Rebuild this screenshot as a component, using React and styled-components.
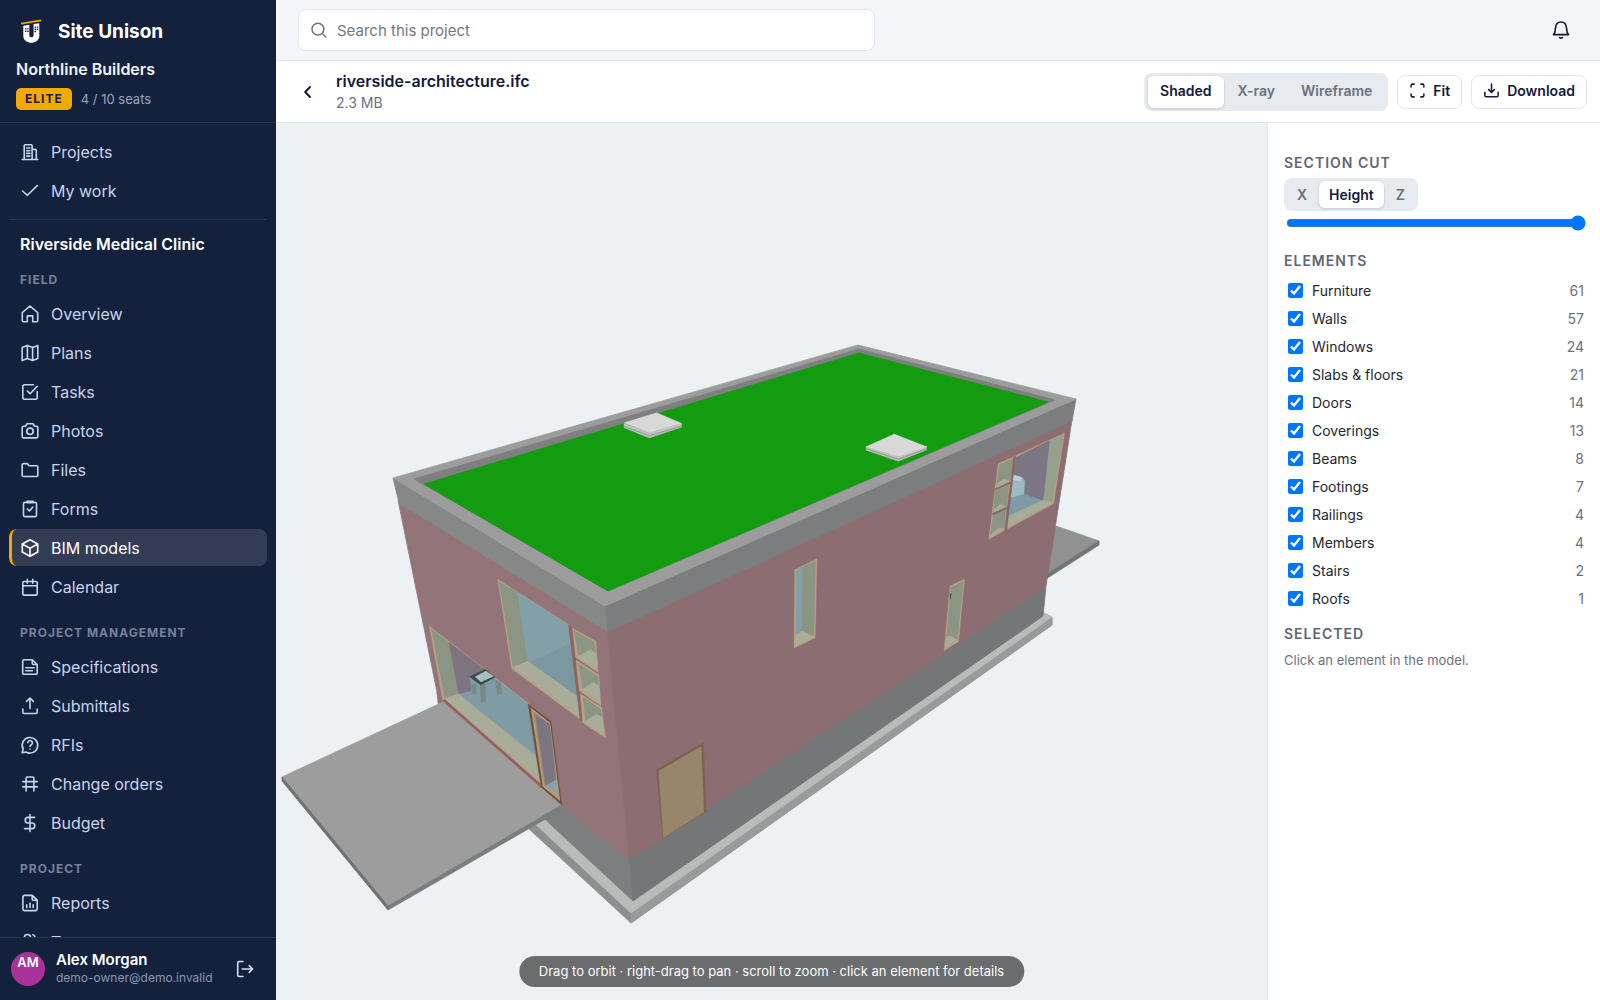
import React, { useState } from 'react';
import styled, { createGlobalStyle, ThemeProvider } from 'styled-components';

const theme = {
  colors: {
    navy: '#14213d',
    navyLine: '#26324e',
    gold: '#f2a900',
    ink: '#14193a',
    text: '#23272f',
    muted: '#6b7280',
    line: '#e2e5ea',
    track: '#e7eaef',
    page: '#f3f5f9',
    canvas: '#edf1f4',
  },
};

const GlobalStyle = createGlobalStyle`
  *, *::before, *::after { box-sizing: border-box; }
  body {
    margin: 0;
    font-family: Inter, "Liberation Sans", sans-serif;
    font-size: 16px;
    color: ${theme.colors.text};
  }
  button, input { font-family: inherit; }
`;

const Shell = styled.div`
  display: flex;
  height: 100vh;
  overflow: hidden;
  background: ${(props) => props.theme.colors.page};
`;

/* ---------- sidebar ---------- */

const Sidebar = styled.aside`
  flex: 0 0 276px;
  display: flex;
  flex-direction: column;
  min-width: 0;
  min-height: 0;
  background: ${(props) => props.theme.colors.navy};
`;

const SidebarHead = styled.div`
  padding: 12px 16px;
  border-bottom: 1px solid ${(props) => props.theme.colors.navyLine};
`;

const Brand = styled.div`
  display: flex;
  align-items: center;
  gap: 12px;
  height: 38px;
  color: #fff;
  font-size: 19px;
  font-weight: 700;
`;

const OrgName = styled.div`
  margin-top: 8px;
  line-height: 22px;
  font-size: 16px;
  font-weight: 600;
  color: #f1f4fa;
`;

const PlanRow = styled.div`
  display: flex;
  align-items: center;
  gap: 9px;
  margin-top: 8px;
  font-size: 13px;
  color: #98a5c0;
`;

const PlanBadge = styled.span`
  padding: 0 9px;
  border-radius: 5px;
  line-height: 22px;
  font-size: 12px;
  font-weight: 700;
  letter-spacing: 1px;
  color: ${(props) => props.theme.colors.navy};
  background: ${(props) => props.theme.colors.gold};
`;

const Nav = styled.nav`
  flex: 1;
  min-height: 0;
  overflow-y: auto;
  scrollbar-width: none;
  padding: 10px 9px 0;
`;

const NavList = styled.ul`
  display: flex;
  flex-direction: column;
  gap: 2px;
  margin: 0;
  padding: 0;
  list-style: none;
`;

const NavLink = styled.a`
  display: flex;
  align-items: center;
  gap: 11px;
  height: 37px;
  padding: 0 8px;
  border-left: 3px solid ${(props) => (props.$active ? props.theme.colors.gold : 'transparent')};
  border-radius: 8px;
  background: ${(props) => (props.$active ? '#323c55' : 'transparent')};
  color: ${(props) => (props.$active ? '#fff' : '#c8d4ee')};
  text-decoration: none;
`;

const ProjectName = styled.div`
  margin-top: 10px;
  padding: 12px 11px 0;
  border-top: 1px solid ${(props) => props.theme.colors.navyLine};
  line-height: 24px;
  font-weight: 600;
  color: #fff;
`;

const NavHeading = styled.h2`
  margin: ${(props) => (props.$first ? '16px' : '20px')} 0 7px;
  padding: 0 11px;
  line-height: 16px;
  font-size: 12px;
  font-weight: 700;
  letter-spacing: 1px;
  text-transform: uppercase;
  color: #76819b;
`;

const UserBar = styled.div`
  display: flex;
  align-items: center;
  gap: 11px;
  height: 63px;
  padding: 0 21px 0 11px;
  border-top: 1px solid ${(props) => props.theme.colors.navyLine};
`;

const Avatar = styled.span`
  flex: none;
  width: 34px;
  height: 34px;
  padding-top: 2px;
  border-radius: 50%;
  background: #a8329a;
  color: #fff;
  font-size: 13px;
  font-weight: 600;
  line-height: 16px;
  text-align: center;
`;

const UserText = styled.div`
  flex: 1;
  min-width: 0;
  line-height: 18px;
  white-space: nowrap;
`;

const UserName = styled.div`
  font-size: 15px;
  font-weight: 600;
  color: #fff;
`;

const UserMail = styled.div`
  font-size: 12px;
  color: #8a96b0;
`;

const PlainButton = styled.button`
  display: flex;
  padding: 0;
  border: 0;
  background: none;
  color: ${(props) => props.$color || props.theme.colors.ink};
  cursor: pointer;
`;

/* ---------- main column ---------- */

const Main = styled.main`
  flex: 1;
  min-width: 0;
  display: flex;
  flex-direction: column;
`;

const TopBar = styled.header`
  display: flex;
  align-items: center;
  justify-content: space-between;
  height: 61px;
  padding: 0 29px 0 22px;
  border-bottom: 1px solid ${(props) => props.theme.colors.line};
`;

const SearchBox = styled.label`
  display: flex;
  align-items: center;
  gap: 9px;
  flex: 0 1 577px;
  height: 42px;
  padding: 0 11px;
  border: 1px solid ${(props) => props.theme.colors.line};
  border-radius: 8px;
  background: #fff;
  color: ${(props) => props.theme.colors.muted};
`;

const SearchInput = styled.input`
  flex: 1;
  min-width: 0;
  padding: 0;
  border: 0;
  outline: 0;
  background: none;
  font-size: 15px;
  color: ${(props) => props.theme.colors.text};
  &::placeholder { color: #737780; opacity: 1; }
`;

const FileBar = styled.div`
  display: flex;
  align-items: center;
  gap: 9px;
  height: 62px;
  padding: 0 13px 0 22px;
  border-bottom: 1px solid ${(props) => props.theme.colors.line};
  background: #fff;
`;

const FileInfo = styled.div`
  flex: 1;
  padding: 0 0 2px 9px;
`;

const FileName = styled.h1`
  margin: 0;
  font-size: 16px;
  font-weight: 600;
  line-height: 24px;
  color: ${(props) => props.theme.colors.ink};
`;

const FileSize = styled.div`
  font-size: 14px;
  line-height: 20px;
  color: ${(props) => props.theme.colors.muted};
`;

const Segments = styled.div`
  display: inline-flex;
  gap: 2px;
  padding: ${(props) => (props.$small ? '3px' : '3px 4px')};
  border-radius: 8px;
  background: ${(props) => props.theme.colors.track};
`;

const Segment = styled.button`
  height: ${(props) => (props.$small ? '27px' : '32px')};
  padding: ${(props) => (props.$small ? '0 10px' : '0 12px 2px')};
  border: 0;
  border-radius: 6px;
  font-size: 14px;
  font-weight: 600;
  cursor: pointer;
  background: ${(props) => (props.$on ? '#fff' : 'transparent')};
  color: ${(props) => (props.$on ? props.theme.colors.ink : props.theme.colors.muted)};
  box-shadow: ${(props) => (props.$on ? '0 1px 3px rgba(20, 33, 61, 0.18)' : 'none')};
`;

const ActionButton = styled.button`
  display: flex;
  align-items: center;
  gap: 7px;
  height: 34px;
  padding: 0 11px 2px;
  border: 1px solid ${(props) => props.theme.colors.line};
  border-radius: 8px;
  background: #fff;
  font-size: 14px;
  font-weight: 600;
  color: ${(props) => props.theme.colors.ink};
  cursor: pointer;
`;

const Workspace = styled.div`
  flex: 1;
  min-height: 0;
  display: flex;
`;

const Viewer = styled.div`
  position: relative;
  flex: 1;
  min-width: 0;
  background: ${(props) => props.theme.colors.canvas};
`;

const Scene = styled.svg`
  display: block;
  width: 100%;
  height: 100%;
`;

const Hint = styled.div`
  position: absolute;
  left: 50%;
  bottom: 13px;
  transform: translateX(-50%);
  padding: 0 20px;
  border-radius: 16px;
  line-height: 31px;
  font-size: 13px;
  white-space: nowrap;
  color: #fff;
  background: #6a6c6e;
`;

const Panel = styled.aside`
  flex: 0 0 333px;
  padding: 30px 12px 16px 16px;
  border-left: 1px solid ${(props) => props.theme.colors.line};
  background: #fff;
`;

const PanelTitle = styled.h2`
  margin: 0 0 5px;
  font-size: 14px;
  font-weight: 600;
  line-height: 20px;
  letter-spacing: 1px;
  text-transform: uppercase;
  color: #5f6675;
`;

const CutSlider = styled.input`
  display: block;
  width: calc(100% - 4px);
  height: 16px;
  margin: 4px 2px 20px;
  accent-color: #0075ff;
`;

const ElementRow = styled.label`
  display: flex;
  align-items: center;
  height: 28px;
  font-size: 14px;
`;

const Tick = styled.input`
  width: 15px;
  height: 15px;
  margin: 0 9px 0 4px;
  accent-color: #0075ff;
`;

const Count = styled.span`
  margin-left: auto;
  padding-right: 4px;
  color: ${(props) => props.theme.colors.muted};
`;

const ElementList = styled.div`
  margin-bottom: 12px;
`;

const PanelNote = styled.p`
  margin: 0;
  font-size: 13px;
  line-height: 22px;
  color: ${(props) => props.theme.colors.muted};
`;

/* ---------- icons, drawn on a 20 x 20 grid ---------- */

const IconSvg = styled.svg`
  flex: none;
  fill: none;
  stroke: currentColor;
  stroke-width: ${(props) => props.$weight || 1.6};
  stroke-linecap: round;
  stroke-linejoin: round;
`;

const icons = {
  projects: 'M2.2 17.5h15.6M4.2 17.5V3.8a1 1 0 0 1 1-1h5.9a1 1 0 0 1 1 1v13.7M12.1 7.4h3.2a1 1 0 0 1 1 1v9.1M6.6 6h3.2M6.6 8.7h3.2M6.6 11.4h3.2M6.6 14.1h3.2',
  check: 'M2.6 10 7.4 14.3 17.2 4.6',
  home: 'M2.3 8.5 10 2.2l7.7 6.3v8.2a1 1 0 0 1-1 1h-4v-5.8H7.3v5.8h-4a1 1 0 0 1-1-1z',
  map: 'M2.2 4.4 7.4 2.4l5.2 2 5.2-2v13.2l-5.2 2-5.2-2-5.2 2zM7.4 2.4v13.2M12.6 4.4v13.2',
  task: 'M17.2 9.6v6.2a1.5 1.5 0 0 1-1.5 1.5H4.3a1.5 1.5 0 0 1-1.5-1.5V4.3a1.5 1.5 0 0 1 1.5-1.5h9.2M7.3 9l2.8 2.8 7-7.4',
  camera: 'M7 2.8h6l1.6 2.5h1.9a1.3 1.3 0 0 1 1.3 1.3v9a1.3 1.3 0 0 1-1.3 1.3h-13a1.3 1.3 0 0 1-1.3-1.3v-9a1.3 1.3 0 0 1 1.3-1.3h1.9zM13.2 10.3a3.2 3.2 0 1 1-6.4 0 3.2 3.2 0 0 1 6.4 0z',
  folder: 'M2.2 4.9a1.3 1.3 0 0 1 1.3-1.3h3.7l1.9 2.1h7.4A1.3 1.3 0 0 1 17.8 7v8.2a1.3 1.3 0 0 1-1.3 1.3h-13a1.3 1.3 0 0 1-1.3-1.3z',
  form: 'M4.8 3.4h10.4a1.3 1.3 0 0 1 1.3 1.3v11.6a1.3 1.3 0 0 1-1.3 1.3H4.8a1.3 1.3 0 0 1-1.3-1.3V4.7a1.3 1.3 0 0 1 1.3-1.3zM7 2.4h6v1.4H7zM7.4 10l2 2 3.3-3.8',
  cube: 'M10 1.8 17.7 6v8L10 18.2 2.3 14V6zM2.5 6.1 10 10.2l7.5-4.1M10 10.2v7.9',
  calendar: 'M4 4.5h12a1.2 1.2 0 0 1 1.2 1.2v11.2a1.2 1.2 0 0 1-1.2 1.2H4a1.2 1.2 0 0 1-1.2-1.2V5.7A1.2 1.2 0 0 1 4 4.5zM2.8 8.8h14.4M7.3 2.4v3.8M12.7 2.4v3.8',
  spec: 'M4.1 2.8h8.2l4.9 4.7v8.4a1.4 1.4 0 0 1-1.4 1.4H4.1a1.4 1.4 0 0 1-1.4-1.4V4.2a1.4 1.4 0 0 1 1.4-1.4zM12.3 2.8v3.7a1 1 0 0 0 1 1h3.9M5.8 10.8h8.4M5.8 13.7h6.6',
  upload: 'M10 12.6V2.2M6.6 5.4 10 2l3.4 3.4M2.8 13v3a1.5 1.5 0 0 0 1.5 1.5h11.4a1.5 1.5 0 0 0 1.5-1.5v-3',
  question: 'M2.2 17.8l.9-3.8A7.8 7.8 0 1 1 6 17zM7.8 7.8a2.3 2.3 0 1 1 3.5 2c-.8.5-1.3.9-1.3 1.7M10 14v.1',
  change: 'M6.1 17V4.2A1.2 1.2 0 0 1 7.3 3h5.4a1.2 1.2 0 0 1 1.2 1.2V17M2.8 7.6h14.4M2.8 12.9h14.4',
  dollar: 'M10 1.6v16.8M14.6 4.4H8a2.8 2.8 0 0 0 0 5.6h4a2.8 2.8 0 0 1 0 5.6H4.6',
  report: 'M4.4 2.4h7.8l5 4.8v8.9a1.5 1.5 0 0 1-1.5 1.5H4.4a1.5 1.5 0 0 1-1.5-1.5V3.9a1.5 1.5 0 0 1 1.5-1.5zM12.2 2.4v3.8a1 1 0 0 0 1 1h4M6.7 11.8v2.6M10 10v4.4M13.2 11.8v2.6',
  team: 'M10.6 5.6a3.1 3.1 0 1 1-6.2 0 3.1 3.1 0 0 1 6.2 0zM2 17.4v-1.6a3.4 3.4 0 0 1 3.4-3.4h4.2a3.4 3.4 0 0 1 3.4 3.4v1.6M13 2.7a3.1 3.1 0 0 1 0 5.8M18 17.4v-1.6a3.4 3.4 0 0 0-2.6-3.3',
  logout: 'M8 2.5H4.2a1.5 1.5 0 0 0-1.5 1.5v12a1.5 1.5 0 0 0 1.5 1.5H8M7.2 10h10.4M14.2 6.6 17.6 10l-3.4 3.4',
  search: 'M15.4 9a6.6 6.6 0 1 1-13.2 0 6.6 6.6 0 0 1 13.2 0zM13.6 13.8l4 4',
  back: 'M12 5 7.2 10l4.8 5',
  bell: 'M2.5 14.6h15c-1.5-1.6-1.8-3.2-1.9-6C15.4 4.6 13.2 2 10 2S4.6 4.6 4.4 8.6c-.1 2.8-.4 4.4-1.9 6zM8.6 17.6c.8.6 2 .6 2.8 0',
  fit: 'M2.5 6V4A1.5 1.5 0 0 1 4 2.5h2M14 2.5h2A1.5 1.5 0 0 1 17.5 4v2M17.5 14v2a1.5 1.5 0 0 1-1.5 1.5h-2M6 17.5H4A1.5 1.5 0 0 1 2.5 16v-2',
  download: 'M10 2.4v9.8M6.7 9 10 12.3 13.3 9M2.2 12.2v3.6a1.5 1.5 0 0 0 1.5 1.5h12.6a1.5 1.5 0 0 0 1.5-1.5v-3.6',
};

const Icon = ({ name, size = 20, weight }) => (
  <IconSvg width={size} height={size} viewBox="0 0 20 20" $weight={weight} aria-hidden="true">
    <path d={icons[name]} />
  </IconSvg>
);

const Logo = () => (
  <svg width="30" height="30" viewBox="0 0 30 30" aria-hidden="true">
    <path d="M5 6.8 25.2 3.4v1.8L5.2 8.6z" fill="#f2a900" />
    <path d="M7.3 9.8l6-1v10.4c0 2.8 4.3 2.8 4.3 0V8.1l5.7-.9v12.5c0 9.4-16 9.4-16 0z" fill="#fff" />
    <path d="M9 12.2h1.4v1.4H9zM11.2 12.2h1.4v1.4h-1.4zM9 14.5h1.4v1.4H9zM11.2 14.5h1.4v1.4h-1.4zM18.6 10.4H20v1.4h-1.4zM20.8 10.4h1.4v1.4h-1.4zM18.6 12.6H20V14h-1.4zM20.8 12.6h1.4V14h-1.4zM18.6 14.8H20v1.4h-1.4z" fill="#14213d" />
  </svg>
);

/* ---------- model drawing ---------- */

// every face is [points, fill]; later faces cover earlier ones
const shell = [
  // rear slab
  ['1056,526 1099,541 1050,572 1030,582 1040,540', '#919191'],
  ['1099,541 1099,545 1049,577 1030,588 1030,582 1050,572', '#747474'],
  // footing
  ['529,829 544,820 633,902 1043,613 1052,617 1052,625 631,923', '#8d8e8f'],
  ['631,913 1052,618 1052,625 631,923', '#999a9b'],
  ['535,824 544,819 633,901 1043,612 1052,617 631,913', '#b9baba'],
  // base
  ['437,692 629,858 633,901 440,722', '#7c7e80'],
  ['629,858 1046,586 1043,616 633,901', '#747678'],
  // walls
  ['398,500 607,630 629,860 555,800 439,702', '#937479'],
  ['607,630 1072,420 1046,586 629,860', '#8c6e72'],
  // front slab
  ['282,777 443,702 562,805 388,906', '#9d9d9d'],
  ['388,906 562,805 561,810 388,910', '#7a7d7e'],
  ['282,777 388,906 388,910 282,781', '#6f7273'],
  // roof edge
  ['393,478 605,606 608,632 399,503', '#868787'],
  ['605,606 1076,399 1072,421 608,632', '#7b7d7e'],
  ['393,478 858,345 1076,399 605,606', '#9c9c9c'],
  ['414,479 859,349 1055,400 608,591', '#7f7f81'],
  ['424,484 859,353 1048,402 608,591', '#139c10'],
];

const skylights = [
  ['192,130 268,158 365,130 365,142 268,174 192,143', '#c3c3c3'],
  ['192,137 268,166 365,137 365,140 268,169 192,140', '#9b9b9b'],
  ['192,128 290,98 365,130 268,158', '#d8d8d8'],
  ['918,200 1015,230 1100,198 1100,210 1015,244 918,211', '#c3c3c3'],
  ['918,205 1015,236 1100,205 1100,208 1015,239 918,208', '#9b9b9b'],
  ['918,200 1003,162 1100,200 1015,230', '#d8d8d8'],
];

const frontOpenings = [
  // upper window
  ['353,57 568,195 600,478 395,326', '#b8a186'],
  ['358,65 412,97 444,304 399,320', '#8a9584'],
  ['412,97 565,195 594,412 444,304', '#83a0a9'],
  ['450,308 568,252 594,412', '#7b979f'],
  ['444,304 594,410 598,470 400,322', '#a7ad98'],
  // pane column
  ['565,195 577,203 608,487 600,478', '#8b6465'],
  ['577,204 648,244 655,338 587,292', '#b8a186'],
  ['582,212 643,247 648,284 595,284', '#8a9584'],
  ['592,290 632,268 649,282 652,330', '#a7ad98'],
  ['588,300 657,345 663,437 598,392', '#b8a186'],
  ['595,310 654,350 657,382 608,388', '#8a9584'],
  ['604,390 640,366 657,378 661,430', '#a7ad98'],
  ['601,402 665,442 677,534 608,488', '#b8a186'],
  ['609,412 662,447 666,478 617,485', '#8a9584'],
  ['613,486 650,462 667,472 673,526', '#a7ad98'],
  // ground floor window
  ['148,198 445,430 482,680 188,422', '#b8a186'],
  ['154,206 206,246 236,402 194,414', '#8a9584'],
  ['206,246 444,432 470,588 236,402', '#7f9ba4'],
  ['206,246 318,332 268,352 274,392 236,402', '#7d7480'],
  ['236,402 465,590 478,662 194,416', '#a7ad98'],
  ['188,422 194,418 482,672 484,684', '#955f60'],
  // table
  ['274,372 288,374 288,402 276,400', '#77878a'],
  ['300,374 316,370 317,424 303,426', '#77878a'],
  ['346,360 362,368 366,402 352,402', '#77878a'],
  ['268,350 316,328 346,352 302,375', '#384b4e'],
  ['285,350 318,333 341,349 303,366', '#a9c0c3'],
  // entrance door
  ['444,432 513,483 546,736 484,682', '#6d5044'],
  ['453,444 510,488 540,722 489,680', '#b59d78'],
  ['461,455 509,493 518,560 528,664 494,676', '#9b886c'],
  ['468,466 509,493 528,662 497,678', '#7c7583'],
  ['497,678 528,660 534,704', '#86a3aa'],
  // side door
  ['829,630 970,548 979,755 972,759 848,836', '#7c6051'],
  ['836,633 964,559 972,757 850,833', '#97866b'],
];

const sideOpenings = [
  ['704,569 771,536 766,773 702,805', '#b8a186'],
  ['708,571 728,561 725,752 707,766', '#83a0a9'],
  ['728,561 767,542 762,768 725,752', '#8a9584'],
  ['706,768 726,753 761,770 706,797', '#a7ad98'],
  ['1170,618 1214,597 1196,785 1152,812', '#b8a186'],
  ['1173,622 1210,604 1192,782 1160,768', '#8a9584'],
  ['1158,788 1168,766 1192,780 1156,804', '#a7ad98'],
  ['1170,642 1174,640 1173,655 1170,658', '#4c5552'],
];

const cornerOpenings = [
  ['294,371 494,279 461,491 266,598', '#b8a186'],
  ['347,352 450,301 432,482 322,530', '#7c7583'],
  ['340,410 368,412 374,424 372,462 430,482 400,505 324,532', '#7d9ba5'],
  ['338,410 362,410 374,422 372,462 330,474', '#9bbac1'],
  ['340,404 364,412 362,422 340,420', '#b9d3d7'],
  ['450,301 490,284 458,486 431,478', '#97a08c'],
  ['326,528 431,479 458,488 321,564', '#a7ad98'],
  ['340,350 347,348 320,574 313,577', '#8b6465'],
  ['298,375 337,356 333,420 288,440', '#8a9584'],
  ['291,430 312,418 333,422 289,442', '#a7ad98'],
  ['286,452 326,433 321,498 279,518', '#8a9584'],
  ['281,508 302,492 322,500 280,518', '#a7ad98'],
  ['280,522 318,505 313,562 270,590', '#8a9584'],
  ['270,586 296,564 314,566 270,592', '#a7ad98'],
  ['285,446 336,423 336,428 285,451', '#8b6465'],
  ['278,520 328,498 328,503 278,526', '#8b6465'],
];

// the thin stroke closes the seams between neighbouring faces
const Faces = ({ faces, transform }) => (
  <g transform={transform} strokeWidth="0.8" strokeLinejoin="round">
    {faces.map(([points, fill]) => (
      <polygon key={points} points={points} fill={fill} stroke={fill} />
    ))}
  </g>
);

const BuildingModel = () => (
  <Scene viewBox="276 123 991 877" role="img" aria-label="Building model">
    <Faces faces={shell} />
    <Faces faces={skylights} transform="translate(560 380) scale(0.3333)" />
    <Faces faces={frontOpenings} transform="translate(380 560) scale(0.3333)" />
    <Faces faces={sideOpenings} transform="translate(560 380) scale(0.3333)" />
    <Faces faces={cornerOpenings} transform="translate(900 340) scale(0.3333)" />
  </Scene>
);

/* ---------- page ---------- */

const topLinks = [
  ['projects', 'Projects'],
  ['check', 'My work'],
];

const sections = [
  {
    title: 'Field',
    links: [
      ['home', 'Overview'],
      ['map', 'Plans'],
      ['task', 'Tasks'],
      ['camera', 'Photos'],
      ['folder', 'Files'],
      ['form', 'Forms'],
      ['cube', 'BIM models'],
      ['calendar', 'Calendar'],
    ],
  },
  {
    title: 'Project management',
    links: [
      ['spec', 'Specifications'],
      ['upload', 'Submittals'],
      ['question', 'RFIs'],
      ['change', 'Change orders'],
      ['dollar', 'Budget'],
    ],
  },
  {
    title: 'Project',
    links: [
      ['report', 'Reports'],
      ['team', 'Team'],
    ],
  },
];

const elements = [
  ['Furniture', 61],
  ['Walls', 57],
  ['Windows', 24],
  ['Slabs & floors', 21],
  ['Doors', 14],
  ['Coverings', 13],
  ['Beams', 8],
  ['Footings', 7],
  ['Railings', 4],
  ['Members', 4],
  ['Stairs', 2],
  ['Roofs', 1],
];

const Links = ({ links }) => (
  <NavList>
    {links.map(([icon, label]) => (
      <li key={label}>
        <NavLink href="#" $active={label === 'BIM models'}>
          <Icon name={icon} />
          {label}
        </NavLink>
      </li>
    ))}
  </NavList>
);

const SegmentGroup = ({ label, options, value, onChange, small }) => (
  <Segments $small={small} role="group" aria-label={label}>
    {options.map((option) => (
      <Segment
        key={option}
        type="button"
        $small={small}
        $on={option === value}
        aria-pressed={option === value}
        onClick={() => onChange(option)}
      >
        {option}
      </Segment>
    ))}
  </Segments>
);

const App = () => {
  const [mode, setMode] = useState('Shaded');
  const [axis, setAxis] = useState('Height');

  return (
    <ThemeProvider theme={theme}>
      <GlobalStyle />
      <Shell>
        <Sidebar>
          <SidebarHead>
            <Brand>
              <Logo />
              Site Unison
            </Brand>
            <OrgName>Northline Builders</OrgName>
            <PlanRow>
              <PlanBadge>ELITE</PlanBadge>
              4 / 10 seats
            </PlanRow>
          </SidebarHead>
          <Nav>
            <Links links={topLinks} />
            <ProjectName>Riverside Medical Clinic</ProjectName>
            {sections.map((section, i) => (
              <React.Fragment key={section.title}>
                <NavHeading $first={i === 0}>{section.title}</NavHeading>
                <Links links={section.links} />
              </React.Fragment>
            ))}
          </Nav>
          <UserBar>
            <Avatar>AM</Avatar>
            <UserText>
              <UserName>Alex Morgan</UserName>
              <UserMail>demo-owner@demo.invalid</UserMail>
            </UserText>
            <PlainButton type="button" aria-label="Sign out" $color="#d5def0">
              <Icon name="logout" />
            </PlainButton>
          </UserBar>
        </Sidebar>

        <Main>
          <TopBar>
            <SearchBox>
              <Icon name="search" size={18} />
              <SearchInput type="search" aria-label="Search this project" placeholder="Search this project" />
            </SearchBox>
            <PlainButton type="button" aria-label="Notifications">
              <Icon name="bell" />
            </PlainButton>
          </TopBar>

          <FileBar>
            <PlainButton type="button" aria-label="Back">
              <Icon name="back" weight={2} />
            </PlainButton>
            <FileInfo>
              <FileName>riverside-architecture.ifc</FileName>
              <FileSize>2.3 MB</FileSize>
            </FileInfo>
            <SegmentGroup
              label="Display mode"
              options={['Shaded', 'X-ray', 'Wireframe']}
              value={mode}
              onChange={setMode}
            />
            <ActionButton type="button">
              <Icon name="fit" size={17} weight={1.8} />
              Fit
            </ActionButton>
            <ActionButton type="button">
              <Icon name="download" size={17} weight={1.8} />
              Download
            </ActionButton>
          </FileBar>

          <Workspace>
            <Viewer>
              <BuildingModel />
              <Hint>Drag to orbit · right-drag to pan · scroll to zoom · click an element for details</Hint>
            </Viewer>
            <Panel>
              <PanelTitle>Section cut</PanelTitle>
              <SegmentGroup small label="Cut axis" options={['X', 'Height', 'Z']} value={axis} onChange={setAxis} />
              <CutSlider type="range" min="0" max="100" defaultValue="100" aria-label="Section cut position" />
              <PanelTitle>Elements</PanelTitle>
              <ElementList>
                {elements.map(([name, count]) => (
                  <ElementRow key={name}>
                    <Tick type="checkbox" defaultChecked />
                    {name}
                    <Count>{count}</Count>
                  </ElementRow>
                ))}
              </ElementList>
              <PanelTitle>Selected</PanelTitle>
              <PanelNote>Click an element in the model.</PanelNote>
            </Panel>
          </Workspace>
        </Main>
      </Shell>
    </ThemeProvider>
  );
};

export default App;
